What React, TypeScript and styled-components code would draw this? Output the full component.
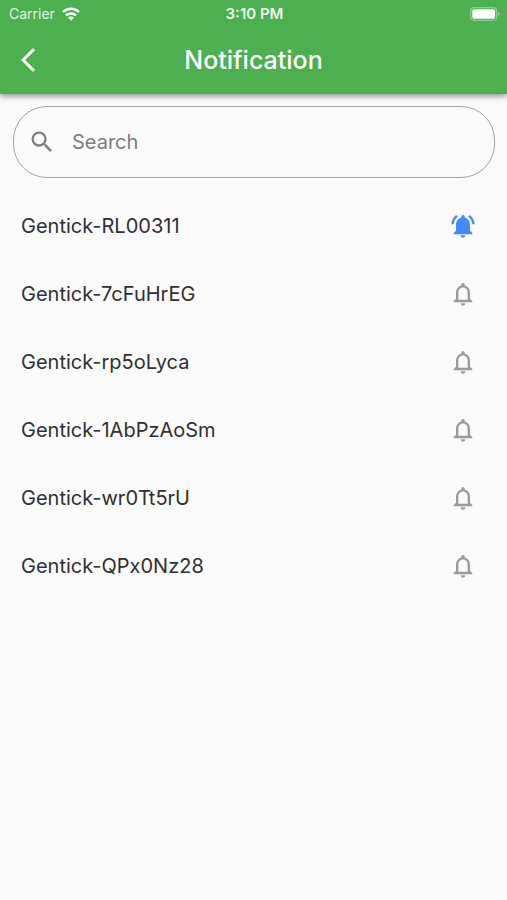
import React, { useState } from "react";
import styled, { createGlobalStyle } from "styled-components";

const GlobalStyle = createGlobalStyle`
  *, *::before, *::after { box-sizing: border-box; }
  body {
    margin: 0;
    background: #fafafa;
    color: #303030;
    font-family: Inter, "Liberation Sans", sans-serif;
  }
  button, input { font: inherit; }
`;

const Header = styled.header`
  background: #4caf50;
  color: #fff;
  box-shadow: 0 2px 6px rgba(0, 0, 0, 0.45);
`;

const StatusBar = styled.div`
  display: grid;
  grid-template-columns: 1fr auto 1fr;
  align-items: center;
  height: 27px;
  padding: 0 7px 0 9px;
  font-size: 14px;
  line-height: 20px;
`;

const Carrier = styled.div`
  display: flex;
  align-items: center;
  gap: 7px;
  color: #e4f4e5;
`;

const Clock = styled.time`
  font-size: 15px;
  font-weight: 600;
  color: #eef8ee;
`;

const Battery = styled.svg`
  display: block;
  justify-self: end;
`;

const TitleBar = styled.div`
  display: grid;
  grid-template-columns: 56px 1fr 56px;
  align-items: center;
  height: 67px;
  padding-bottom: 2px;
`;

const BackButton = styled.button`
  display: flex;
  align-items: center;
  height: 56px;
  padding: 0 0 0 21px;
  border: 0;
  background: none;
  color: #fff;
  cursor: pointer;
`;

const Title = styled.h1`
  margin: 0;
  font-size: 25px;
  line-height: 32px;
  font-weight: 500;
  text-align: center;
`;

const Content = styled.main`
  padding: 12px 12px 0 13px;
`;

const SearchBox = styled.label`
  display: flex;
  align-items: center;
  gap: 16px;
  height: 72px;
  padding: 0 16px 0 14px;
  border: 1px solid #a3a3a3;
  border-radius: 34px;
  color: #7d7d7d;
`;

const SearchInput = styled.input`
  flex: 1;
  min-width: 0;
  padding: 0;
  border: 0;
  outline: 0;
  background: none;
  color: #303030;
  font-size: 20px;
  line-height: 28px;
  &::placeholder {
    color: #7d7d7d;
    opacity: 1;
  }
`;

const DeviceList = styled.ul`
  margin: 0;
  padding: 14px 0 0;
  list-style: none;
`;

const DeviceRow = styled.li`
  display: flex;
  align-items: center;
  justify-content: space-between;
  height: 68px;
  padding: 0 12px 0 8px;
  font-size: 20px;
  line-height: 28px;
`;

const BellButton = styled.button<{ $active: boolean }>`
  display: flex;
  padding: 6px;
  border: 0;
  background: none;
  color: ${({ $active }) => ($active ? "#448aff" : "#9b9b9b")};
  cursor: pointer;
`;

const Glyph = styled.svg`
  display: block;
  flex: none;
  fill: currentColor;
`;

const BELL =
  "M12 22c1.1 0 2-.9 2-2h-4c0 1.1.9 2 2 2zm6-6v-5c0-3.07-1.63-5.64-4.5-6.32V4c0-.83-.67-1.5-1.5-1.5s-1.5.67-1.5 1.5v.68C7.64 5.36 6 7.92 6 11v5l-2 2v1h16v-1l-2-2zm-2 1H8v-6c0-2.48 1.51-4.5 4-4.5s4 2.02 4 4.5v6z";
const BELL_ACTIVE =
  "M7.58 4.08L6.15 2.65C3.75 4.48 2.17 7.3 2.03 10.5h2c.15-2.65 1.51-4.97 3.55-6.42zm12.39 6.42h2c-.15-3.2-1.73-6.02-4.12-7.85l-1.42 1.43c2.02 1.45 3.39 3.77 3.54 6.42zM18 11c0-3.07-1.64-5.64-4.5-6.32V4c0-.83-.67-1.5-1.5-1.5s-1.5.67-1.5 1.5v.68C7.63 5.36 6 7.92 6 11v5l-2 2v1h16v-1l-2-2v-5zm-6 11c.14 0 .27-.01.4-.04.65-.14 1.18-.58 1.44-1.18.1-.24.15-.5.15-.78h-4c.01 1.1.9 2 2.01 2z";

const DEVICES = [
  "Gentick-RL00311",
  "Gentick-7cFuHrEG",
  "Gentick-rp5oLyca",
  "Gentick-1AbPzAoSm",
  "Gentick-wr0Tt5rU",
  "Gentick-QPx0Nz28",
];

export default function App() {
  const [query, setQuery] = useState("");
  const [enabled, setEnabled] = useState<string[]>([DEVICES[0]]);

  const toggle = (name: string) =>
    setEnabled((list) =>
      list.includes(name) ? list.filter((n) => n !== name) : [...list, name]
    );

  const shown = DEVICES.filter((n) =>
    n.toLowerCase().includes(query.toLowerCase())
  );

  return (
    <>
      <GlobalStyle />
      <Header>
        <StatusBar>
          <Carrier>
            <span>Carrier</span>
            <Glyph width="18" height="14" viewBox="0 0 18 14" aria-hidden="true">
              <g fill="none" stroke="#fff" strokeWidth="2.5">
                <path d="M1 5.1C5.5.7 12.5.7 17 5.1" />
                <path d="M4 8.4c2.8-2.7 7.2-2.7 10 0" />
              </g>
              <path d="M9 13.6 6.1 10.7c1.6-1.5 4.2-1.5 5.8 0z" fill="#fff" />
            </Glyph>
          </Carrier>
          <Clock>3:10 PM</Clock>
          <Battery width="30" height="14" viewBox="0 0 30 14" aria-hidden="true">
            <rect x="0.7" y="0.7" width="26" height="12.6" rx="3.5" fill="none" stroke="#8fce92" strokeWidth="1.2" />
            <rect x="2.3" y="2.3" width="22.8" height="9.4" rx="1.8" fill="#fff" />
            <path d="M28 5v4c2-.8 2-3.2 0-4z" fill="#8fce92" />
          </Battery>
        </StatusBar>
        <TitleBar>
          <BackButton type="button" aria-label="Back">
            <Glyph width="14" height="24" viewBox="0 2 11.7 20" aria-hidden="true">
              <path d="M11.67 3.87 9.9 2.1 0 12l9.9 9.9 1.77-1.77L3.54 12z" />
            </Glyph>
          </BackButton>
          <Title>Notification</Title>
        </TitleBar>
      </Header>
      <Content>
        <SearchBox>
          <Glyph width="28" height="28" viewBox="0 0 24 24" aria-hidden="true">
            <path d="M15.5 14h-.79l-.28-.27A6.471 6.471 0 0 0 16 9.5 6.5 6.5 0 1 0 9.5 16c1.61 0 3.09-.59 4.23-1.57l.27.28v.79l5 4.99L20.49 19l-4.99-5zm-6 0C7.01 14 5 11.99 5 9.5S7.01 5 9.5 5 14 7.01 14 9.5 11.99 14 9.5 14z" />
          </Glyph>
          <SearchInput
            type="text"
            aria-label="Search"
            placeholder="Search"
            value={query}
            onChange={(e) => setQuery(e.target.value)}
          />
        </SearchBox>
        <DeviceList>
          {shown.map((name) => {
            const active = enabled.includes(name);
            return (
              <DeviceRow key={name}>
                <span>{name}</span>
                <BellButton
                  type="button"
                  $active={active}
                  aria-pressed={active}
                  aria-label={`Notifications for ${name}`}
                  onClick={() => toggle(name)}
                >
                  <Glyph width="28" height="28" viewBox="0 0 24 24" aria-hidden="true">
                    <path d={active ? BELL_ACTIVE : BELL} />
                  </Glyph>
                </BellButton>
              </DeviceRow>
            );
          })}
        </DeviceList>
      </Content>
    </>
  );
}
